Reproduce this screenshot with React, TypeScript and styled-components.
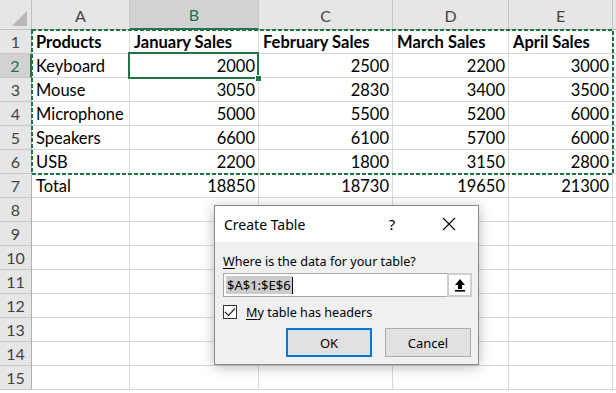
import React from "react";
import styled, { createGlobalStyle, css } from "styled-components";

const GREEN = "#217346";

const Global = createGlobalStyle`
  html, body { margin: 0; padding: 0; background: #fff; }
  body { width: 616px; height: 393px; overflow: hidden; }
  * { box-sizing: border-box; }
`;

const Sheet = styled.div`
  position: relative;
  width: 616px;
  height: 393px;
  overflow: hidden;
  font-family: Lato, "Open Sans", sans-serif;
`;

const Grid = styled.div`
  display: grid;
  grid-template-columns: 32px 98px 129px 134px 116px 104px 1fr;
  grid-template-rows: 30px repeat(15, 24px);
`;

const Corner = styled.div`
  position: relative;
  background: #e6e6e6;
  border-right: 1px solid #c0c0c0;
  border-bottom: 1px solid #c0c0c0;
  &::after {
    content: "";
    position: absolute;
    right: 4px;
    bottom: 3px;
    width: 0;
    height: 0;
    border-left: 15px solid transparent;
    border-bottom: 15px solid #b8b8b8;
  }
`;

const ColHead = styled.div<{ $sel?: boolean }>`
  display: flex;
  align-items: center;
  justify-content: center;
  padding-top: 1px;
  font-size: 16px;
  color: #444;
  background: #e6e6e6;
  border-right: 1px solid #c6c6c6;
  border-bottom: 1px solid #b0b0b0;
  ${(p) =>
    p.$sel &&
    css`
      background: #d2d2d2;
      color: ${GREEN};
      border-bottom: 2px solid ${GREEN};
    `}
`;

const RowHead = styled.div<{ $sel?: boolean }>`
  display: flex;
  align-items: center;
  justify-content: center;
  font-size: 16px;
  color: #444;
  background: #e6e6e6;
  border-right: 1px solid #b0b0b0;
  border-bottom: 1px solid #c6c6c6;
  ${(p) =>
    p.$sel &&
    css`
      background: #d2d2d2;
      color: ${GREEN};
      border-right: 2px solid ${GREEN};
    `}
`;

const Cell = styled.div<{ $num?: boolean; $bold?: boolean }>`
  display: flex;
  align-items: flex-end;
  justify-content: ${(p) => (p.$num ? "flex-end" : "flex-start")};
  padding: 0 ${(p) => (p.$num ? "3px" : "0")} 1px ${(p) => (p.$num ? "0" : "4px")};
  font-size: 16.5px;
  line-height: 20px;
  font-weight: ${(p) => (p.$bold ? 700 : 400)};
  color: #000;
  white-space: nowrap;
  border-right: 1px solid #d9d9d9;
  border-bottom: 1px solid #d9d9d9;
`;

const Marquee = styled.svg`
  position: absolute;
  left: 31px;
  top: 29px;
`;

const Selection = styled.div`
  position: absolute;
  left: 128px;
  top: 52px;
  width: 131px;
  height: 27px;
  border: 2px solid ${GREEN};
`;

const Handle = styled.div`
  position: absolute;
  right: -5px;
  bottom: -5px;
  width: 7px;
  height: 7px;
  background: ${GREEN};
  border: 1px solid #fff;
`;

/* Dialog */
const Dialog = styled.div`
  position: absolute;
  left: 214px;
  top: 205px;
  width: 265px;
  height: 160px;
  display: flex;
  flex-direction: column;
  border: 1px solid #8a8a8a;
  background: #f0f0f0;
  box-shadow: 0 2px 12px rgba(0, 0, 0, 0.28);
  font-family: "Noto Sans", "Open Sans", sans-serif;
  font-size: 12.6px;
  color: #000;
`;

const TitleBar = styled.div`
  height: 37px;
  display: flex;
  align-items: center;
  background: #fff;
  padding-left: 9px;
`;

const Title = styled.div`
  flex: 1;
  font-size: 14px;
`;

const Help = styled.div`
  width: 20px;
  text-align: center;
  font-size: 15px;
  margin-right: 37px;
`;

const Close = styled.div`
  width: 20px;
  display: flex;
  justify-content: center;
  margin-right: 19px;
`;

const Body = styled.div`
  flex: 1;
  display: flex;
  flex-direction: column;
  padding: 11px 6px 7px 8px;
`;

const Label = styled.div`
  height: 18px;
  line-height: 18px;
`;

const U = styled.span`
  text-decoration: underline;
  text-underline-offset: 2px;
`;

const InputBox = styled.div`
  margin-top: 2px;
  height: 24px;
  display: flex;
  background: #fff;
  border: 1px solid #a8a8a8;
`;

const InputText = styled.div`
  flex: 1;
  display: flex;
  align-items: center;
  padding-left: 2px;
  font-size: 13px;
`;

const Selected = styled.span`
  background: #cccccc;
  line-height: 18px;
  padding: 0 1px;
`;

const Caret = styled.span`
  display: inline-block;
  width: 1px;
  height: 17px;
  background: #000;
`;

const RefButton = styled.div`
  width: 25px;
  display: flex;
  align-items: center;
  justify-content: center;
  background: #fff;
  border: 2px solid #cfcfcf;
  margin: -1px -1px -1px 0;
`;

const CheckRow = styled.div`
  margin-top: 8px;
  height: 14px;
  display: flex;
  align-items: center;
  gap: 9px;
`;

const CheckBox = styled.div`
  width: 14px;
  height: 14px;
  border: 1px solid #333;
  background: #fff;
  display: flex;
  align-items: center;
  justify-content: center;
`;

const Buttons = styled.div`
  margin-top: 9px;
  display: flex;
  justify-content: flex-end;
  gap: 13px;
  padding-right: 1px;
`;

const Button = styled.div<{ $primary?: boolean }>`
  width: 86px;
  height: 29px;
  display: flex;
  align-items: center;
  justify-content: center;
  font-size: 13px;
  background: #e1e1e1;
  border: ${(p) => (p.$primary ? "2px solid #0078d7" : "1px solid #adadad")};
`;

type Row = { label: string; vals: string[]; bold?: boolean };

const data: Row[] = [
  { label: "Products", vals: ["January Sales", "February Sales", "March Sales", "April Sales"], bold: true },
  { label: "Keyboard", vals: ["2000", "2500", "2200", "3000"] },
  { label: "Mouse", vals: ["3050", "2830", "3400", "3500"] },
  { label: "Microphone", vals: ["5000", "5500", "5200", "6000"] },
  { label: "Speakers", vals: ["6600", "6100", "5700", "6000"] },
  { label: "USB", vals: ["2200", "1800", "3150", "2800"] },
  { label: "Total", vals: ["18850", "18730", "19650", "21300"] },
];

const letters = ["A", "B", "C", "D", "E", ""];

export default function App() {
  const rows = [];
  for (let r = 1; r <= 15; r++) {
    const d = data[r - 1];
    rows.push(
      <React.Fragment key={r}>
        <RowHead $sel={r === 2}>{r}</RowHead>
        <Cell $bold={d?.bold}>{d ? d.label : ""}</Cell>
        {[0, 1, 2, 3].map((i) => (
          <Cell key={i} $num={!d?.bold} $bold={d?.bold}>
            {d ? d.vals[i] : ""}
          </Cell>
        ))}
        <Cell />
      </React.Fragment>
    );
  }
  return (
    <Sheet>
      <Global />
      <Grid>
        <Corner />
        {letters.map((l, i) => (
          <ColHead key={i} $sel={l === "B"}>
            {l}
          </ColHead>
        ))}
        {rows}
      </Grid>
      <Marquee width={583} height={146}>
        <rect x={1} y={1} width={581} height={144} fill="none" stroke={GREEN} strokeWidth={2} strokeDasharray="4 2" />
      </Marquee>
      <Selection>
        <Handle />
      </Selection>
      <Dialog>
        <TitleBar>
          <Title>Create Table</Title>
          <Help>?</Help>
          <Close>
            <svg width="14" height="14" viewBox="0 0 14 14">
              <path d="M1 1 L13 13 M13 1 L1 13" stroke="#000" strokeWidth="1.1" fill="none" />
            </svg>
          </Close>
        </TitleBar>
        <Body>
          <Label>
            <U>W</U>here is the data for your table?
          </Label>
          <InputBox>
            <InputText>
              <Selected>$A$1:$E$6</Selected>
              <Caret />
            </InputText>
            <RefButton>
              <svg width="12" height="14" viewBox="0 0 12 14">
                <path d="M6 1 L11 7 L8 7 L8 11 L4 11 L4 7 L1 7 Z" fill="#000" />
                <rect x="1" y="12" width="10" height="1.6" fill="#000" />
              </svg>
            </RefButton>
          </InputBox>
          <CheckRow>
            <CheckBox>
              <svg width="12" height="10" viewBox="0 0 12 10">
                <path d="M1 5 L4.5 8.5 L11 1.5" stroke="#222" strokeWidth="1.2" fill="none" />
              </svg>
            </CheckBox>
            <span>
              <U>M</U>y table has headers
            </span>
          </CheckRow>
          <Buttons>
            <Button $primary>OK</Button>
            <Button>Cancel</Button>
          </Buttons>
        </Body>
      </Dialog>
    </Sheet>
  );
}
